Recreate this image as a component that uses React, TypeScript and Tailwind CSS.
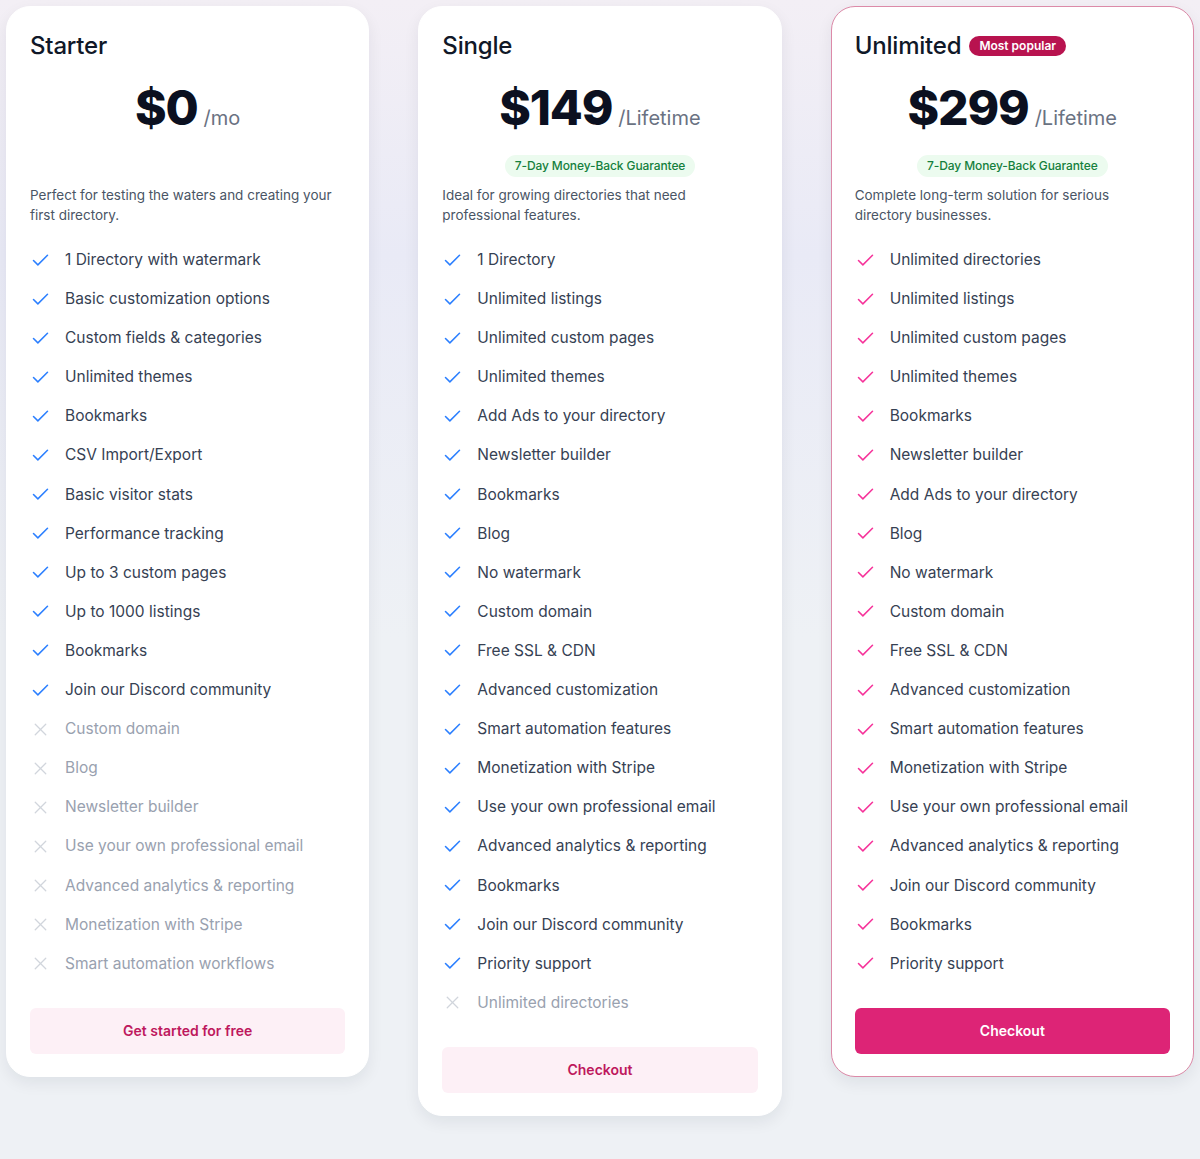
import React from 'react';
import { Check, X } from 'lucide-react';

type Feature = { label: string; included: boolean };

interface Plan {
    name: string;
    price: string;
    period: string;
    guarantee: boolean;
    description: string;
    features: Feature[];
    cta: string;
    popular?: boolean;
}

const yes = (label: string): Feature => ({ label, included: true });
const no = (label: string): Feature => ({ label, included: false });

const plans: Plan[] = [
    {
        name: 'Starter',
        price: '$0',
        period: '/mo',
        guarantee: false,
        description: 'Perfect for testing the waters and creating your first directory.',
        features: [
            yes('1 Directory with watermark'),
            yes('Basic customization options'),
            yes('Custom fields & categories'),
            yes('Unlimited themes'),
            yes('Bookmarks'),
            yes('CSV Import/Export'),
            yes('Basic visitor stats'),
            yes('Performance tracking'),
            yes('Up to 3 custom pages'),
            yes('Up to 1000 listings'),
            yes('Bookmarks'),
            yes('Join our Discord community'),
            no('Custom domain'),
            no('Blog'),
            no('Newsletter builder'),
            no('Use your own professional email'),
            no('Advanced analytics & reporting'),
            no('Monetization with Stripe'),
            no('Smart automation workflows'),
        ],
        cta: 'Get started for free',
    },
    {
        name: 'Single',
        price: '$149',
        period: '/Lifetime',
        guarantee: true,
        description: 'Ideal for growing directories that need professional features.',
        features: [
            yes('1 Directory'),
            yes('Unlimited listings'),
            yes('Unlimited custom pages'),
            yes('Unlimited themes'),
            yes('Add Ads to your directory'),
            yes('Newsletter builder'),
            yes('Bookmarks'),
            yes('Blog'),
            yes('No watermark'),
            yes('Custom domain'),
            yes('Free SSL & CDN'),
            yes('Advanced customization'),
            yes('Smart automation features'),
            yes('Monetization with Stripe'),
            yes('Use your own professional email'),
            yes('Advanced analytics & reporting'),
            yes('Bookmarks'),
            yes('Join our Discord community'),
            yes('Priority support'),
            no('Unlimited directories'),
        ],
        cta: 'Checkout',
    },
    {
        name: 'Unlimited',
        price: '$299',
        period: '/Lifetime',
        guarantee: true,
        description: 'Complete long-term solution for serious directory businesses.',
        features: [
            yes('Unlimited directories'),
            yes('Unlimited listings'),
            yes('Unlimited custom pages'),
            yes('Unlimited themes'),
            yes('Bookmarks'),
            yes('Newsletter builder'),
            yes('Add Ads to your directory'),
            yes('Blog'),
            yes('No watermark'),
            yes('Custom domain'),
            yes('Free SSL & CDN'),
            yes('Advanced customization'),
            yes('Smart automation features'),
            yes('Monetization with Stripe'),
            yes('Use your own professional email'),
            yes('Advanced analytics & reporting'),
            yes('Join our Discord community'),
            yes('Bookmarks'),
            yes('Priority support'),
        ],
        cta: 'Checkout',
        popular: true,
    },
];

const PlanCard: React.FC<{ plan: Plan }> = ({ plan }) => (
    <div
        className={`bg-white rounded-3xl px-[23px] pt-[23px] pb-[22px] flex flex-col shadow-[0_6px_16px_rgba(15,23,42,0.07)] border ${
            plan.popular ? 'border-[#dc8aa8]' : 'border-white'
        }`}
    >
        <div className="flex items-center gap-2 h-8">
            <h3 className="text-2xl font-medium text-gray-900 leading-8 tracking-[-0.2px]">{plan.name}</h3>
            {plan.popular && (
                <span className="bg-[#b8134f] text-white text-xs font-semibold rounded-full px-2.5 leading-5 h-5">
                    Most popular
                </span>
            )}
        </div>

        <div className="flex items-baseline justify-center mt-[22px] h-12">
            <span className="text-5xl leading-[48px] font-extrabold text-[#0b1020] tracking-tight">{plan.price}</span>
            <span className="text-xl text-gray-500 ml-1.5">{plan.period}</span>
        </div>

        <div className="flex justify-center mt-[23px]">
            <span
                className={`bg-[#ecfbef] text-[#15803d] text-xs font-medium rounded-full px-2.5 h-[22px] leading-[22px] tracking-[-0.1px] ${
                    plan.guarantee ? '' : 'invisible'
                }`}
            >
                7-Day Money-Back Guarantee
            </span>
        </div>

        <p className="text-[13.5px] text-gray-600 leading-5 mt-2">{plan.description}</p>

        <ul className="flex flex-col gap-[15.1px] mt-[23px]">
            {plan.features.map((f, i) => (
                <li key={i} className="flex items-center gap-[14px] h-6">
                    {f.included ? (
                        <Check
                            size={21}
                            strokeWidth={1.75}
                            className={plan.popular ? 'text-pink-500 shrink-0' : 'text-blue-500 shrink-0'}
                        />
                    ) : (
                        <X size={21} strokeWidth={1.5} className="text-gray-300 shrink-0" />
                    )}
                    <span className={`text-[15.5px] leading-6 ${f.included ? 'text-gray-700' : 'text-gray-400'}`}>
                        {f.label}
                    </span>
                </li>
            ))}
        </ul>

        <button
            className={`mt-8 h-[46px] w-full rounded-md text-sm font-semibold ${
                plan.popular ? 'bg-[#dd2476] text-white' : 'bg-[#fdf0f6] text-[#be185d]'
            }`}
        >
            {plan.cta}
        </button>
    </div>
);

const App: React.FC = () => (
    <div
        className="min-h-[1159px] w-full bg-[linear-gradient(180deg,#f3eff5_0%,#e9eaf6_22%,#eef1f5_55%,#eef1f5_100%)] px-[6px] pt-[6px] pb-10"
        style={{ fontFamily: 'Inter, "Noto Sans", sans-serif' }}
    >
        <div className="grid grid-cols-3 gap-[49px] items-start">
            {plans.map((p) => (
                <PlanCard key={p.name} plan={p} />
            ))}
        </div>
    </div>
);

export default App;
